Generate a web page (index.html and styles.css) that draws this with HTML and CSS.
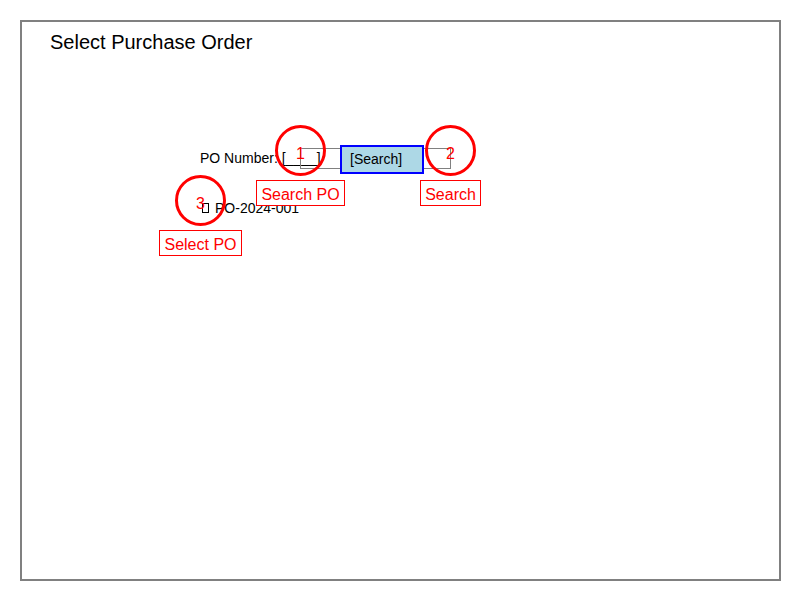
FILE: index.html
```html
<!DOCTYPE html>
<html lang="en">
<head>
  <meta charset="utf-8">
  <title>Select Purchase Order</title>
  <link rel="stylesheet" href="styles.css">
</head>
<body>
  <main class="screen">
    <h1 class="title">Select Purchase Order</h1>
    <form class="form">
      <div class="row">
        <label class="field-label" for="po-number">PO Number: [____]</label>
        <input class="field" id="po-number" type="text">
        <button class="search" type="button">[Search]</button>
        <div class="marker marker-search-po">
          <span class="ring">1</span>
          <span class="tag">Search PO</span>
        </div>
        <div class="marker marker-search">
          <span class="ring">2</span>
          <span class="tag">Search</span>
        </div>
      </div>
      <div class="row">
        <input class="check" id="po-1" type="checkbox">
        <label class="option" for="po-1">PO-2024-001</label>
        <div class="marker marker-select-po">
          <span class="ring">3</span>
          <span class="tag">Select PO</span>
        </div>
      </div>
    </form>
  </main>
</body>
</html>
```
FILE: styles.css
```css
* {
  box-sizing: border-box;
}

body {
  margin: 0;
  min-height: 100vh;
  display: flex;
  padding: 20px 19px 19px 20px;
  background: #fff;
  color: #000;
  font: 14px/16px "Liberation Sans", Arial, sans-serif;
}

.screen {
  flex: 1;
  padding: 8px 28px;
  border: 2px solid #808080;
}

.title {
  margin: 0;
  font-size: 20px;
  font-weight: 400;
  line-height: 24px;
}

.form {
  display: grid;
  gap: 22px;
  margin-top: 90px;
  padding-left: 150px;
}

.row {
  position: relative;
  display: flex;
  align-items: center;
  height: 28px;
}

.field-label {
  width: 100px;
  white-space: nowrap;
}

.field {
  width: 151px;
  height: 21px;
  padding: 0 4px;
  border: 1px solid #808080;
  border-radius: 0;
  background: transparent;
  font: inherit;
}

.search {
  position: absolute;
  left: 140px;
  top: 1px;
  width: 84px;
  height: 29px;
  padding: 0 8px 2px;
  border: 2px solid #00f;
  border-radius: 0;
  background: #add8e6;
  color: #000;
  font: inherit;
  text-align: left;
}

.check {
  appearance: none;
  width: 7px;
  height: 10px;
  margin: 0 6px 0 2px;
  border: 1px solid #000;
}

/* Numbered callouts drawn over the form */
.marker {
  position: absolute;
  z-index: 1;
  display: flex;
  flex-direction: column;
  align-items: center;
  gap: 4px;
  width: 51px;
  color: #f00;
  font-size: 16px;
}

.marker-search-po {
  left: 75px;
  top: -19px;
}

.marker-search {
  left: 225px;
  top: -19px;
}

.marker-select-po {
  left: -25px;
  top: -19px;
}

.ring {
  width: 51px;
  height: 51px;
  padding-top: 3px;
  border: 3px solid #f00;
  border-radius: 50%;
  line-height: 45px;
  text-align: center;
}

.tag {
  padding: 4px 4px 0;
  border: 1px solid #f00;
  background: #fff;
  line-height: 20px;
  white-space: nowrap;
}
```
